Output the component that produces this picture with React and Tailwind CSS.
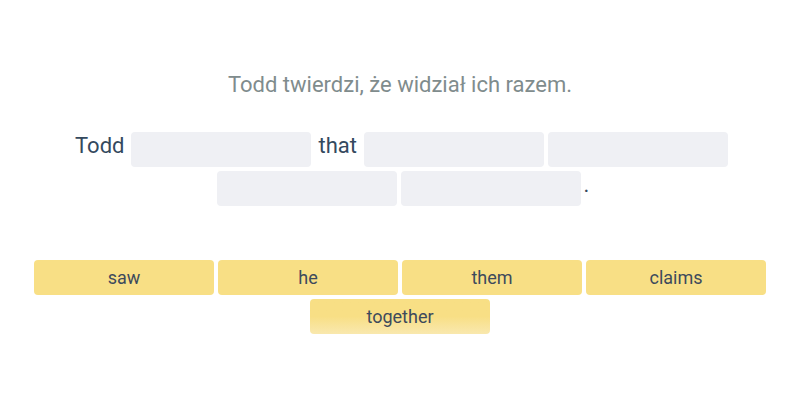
import React from "react";

const sentence = [
  { type: "word", text: "Todd" },
  { type: "blank" },
  { type: "word", text: "that" },
  { type: "blank" },
  { type: "blank" },
  { type: "blank" },
  { type: "blank" },
  { type: "punct", text: "." },
];

const bank = ["saw", "he", "them", "claims", "together"];

export default function App() {
  return (
    <div
      className="w-[800px] h-[400px] bg-white flex flex-col items-center"
      style={{ fontFamily: "Roboto, 'Liberation Sans', sans-serif" }}
    >
      <div className="mt-[70px] text-[22px] leading-[30px] text-[#7f8c8d]">
        Todd twierdzi, że widział ich razem.
      </div>

      <div className="mt-[32px] w-[760px] flex flex-wrap justify-center gap-1">
        {sentence.map((item, i) =>
          item.type === "blank" ? (
            <div key={i} className="w-[180px] h-[35px] rounded bg-[#eff0f4]" />
          ) : (
            <span
              key={i}
              className={
                "h-[35px] text-[22px] leading-[28px] text-[#34495e] " +
                (item.type === "punct" ? "-ml-[1px] -mr-[6px]" : "px-[3px]")
              }
            >
              {item.text}
            </span>
          )
        )}
      </div>

      <div className="mt-[54px] w-[760px] flex flex-wrap justify-center gap-1">
        {bank.map((w, i) => (
          <div
            key={w}
            className={
              "w-[180px] h-[35px] rounded flex items-center justify-center text-[18px] text-[#3d4a5c] " +
              (i === 4
                ? "bg-gradient-to-b from-[#f8df85] from-50% to-[#f9e8ae]"
                : "bg-[#f8df85]")
            }
          >
            {w}
          </div>
        ))}
      </div>
    </div>
  );
}
